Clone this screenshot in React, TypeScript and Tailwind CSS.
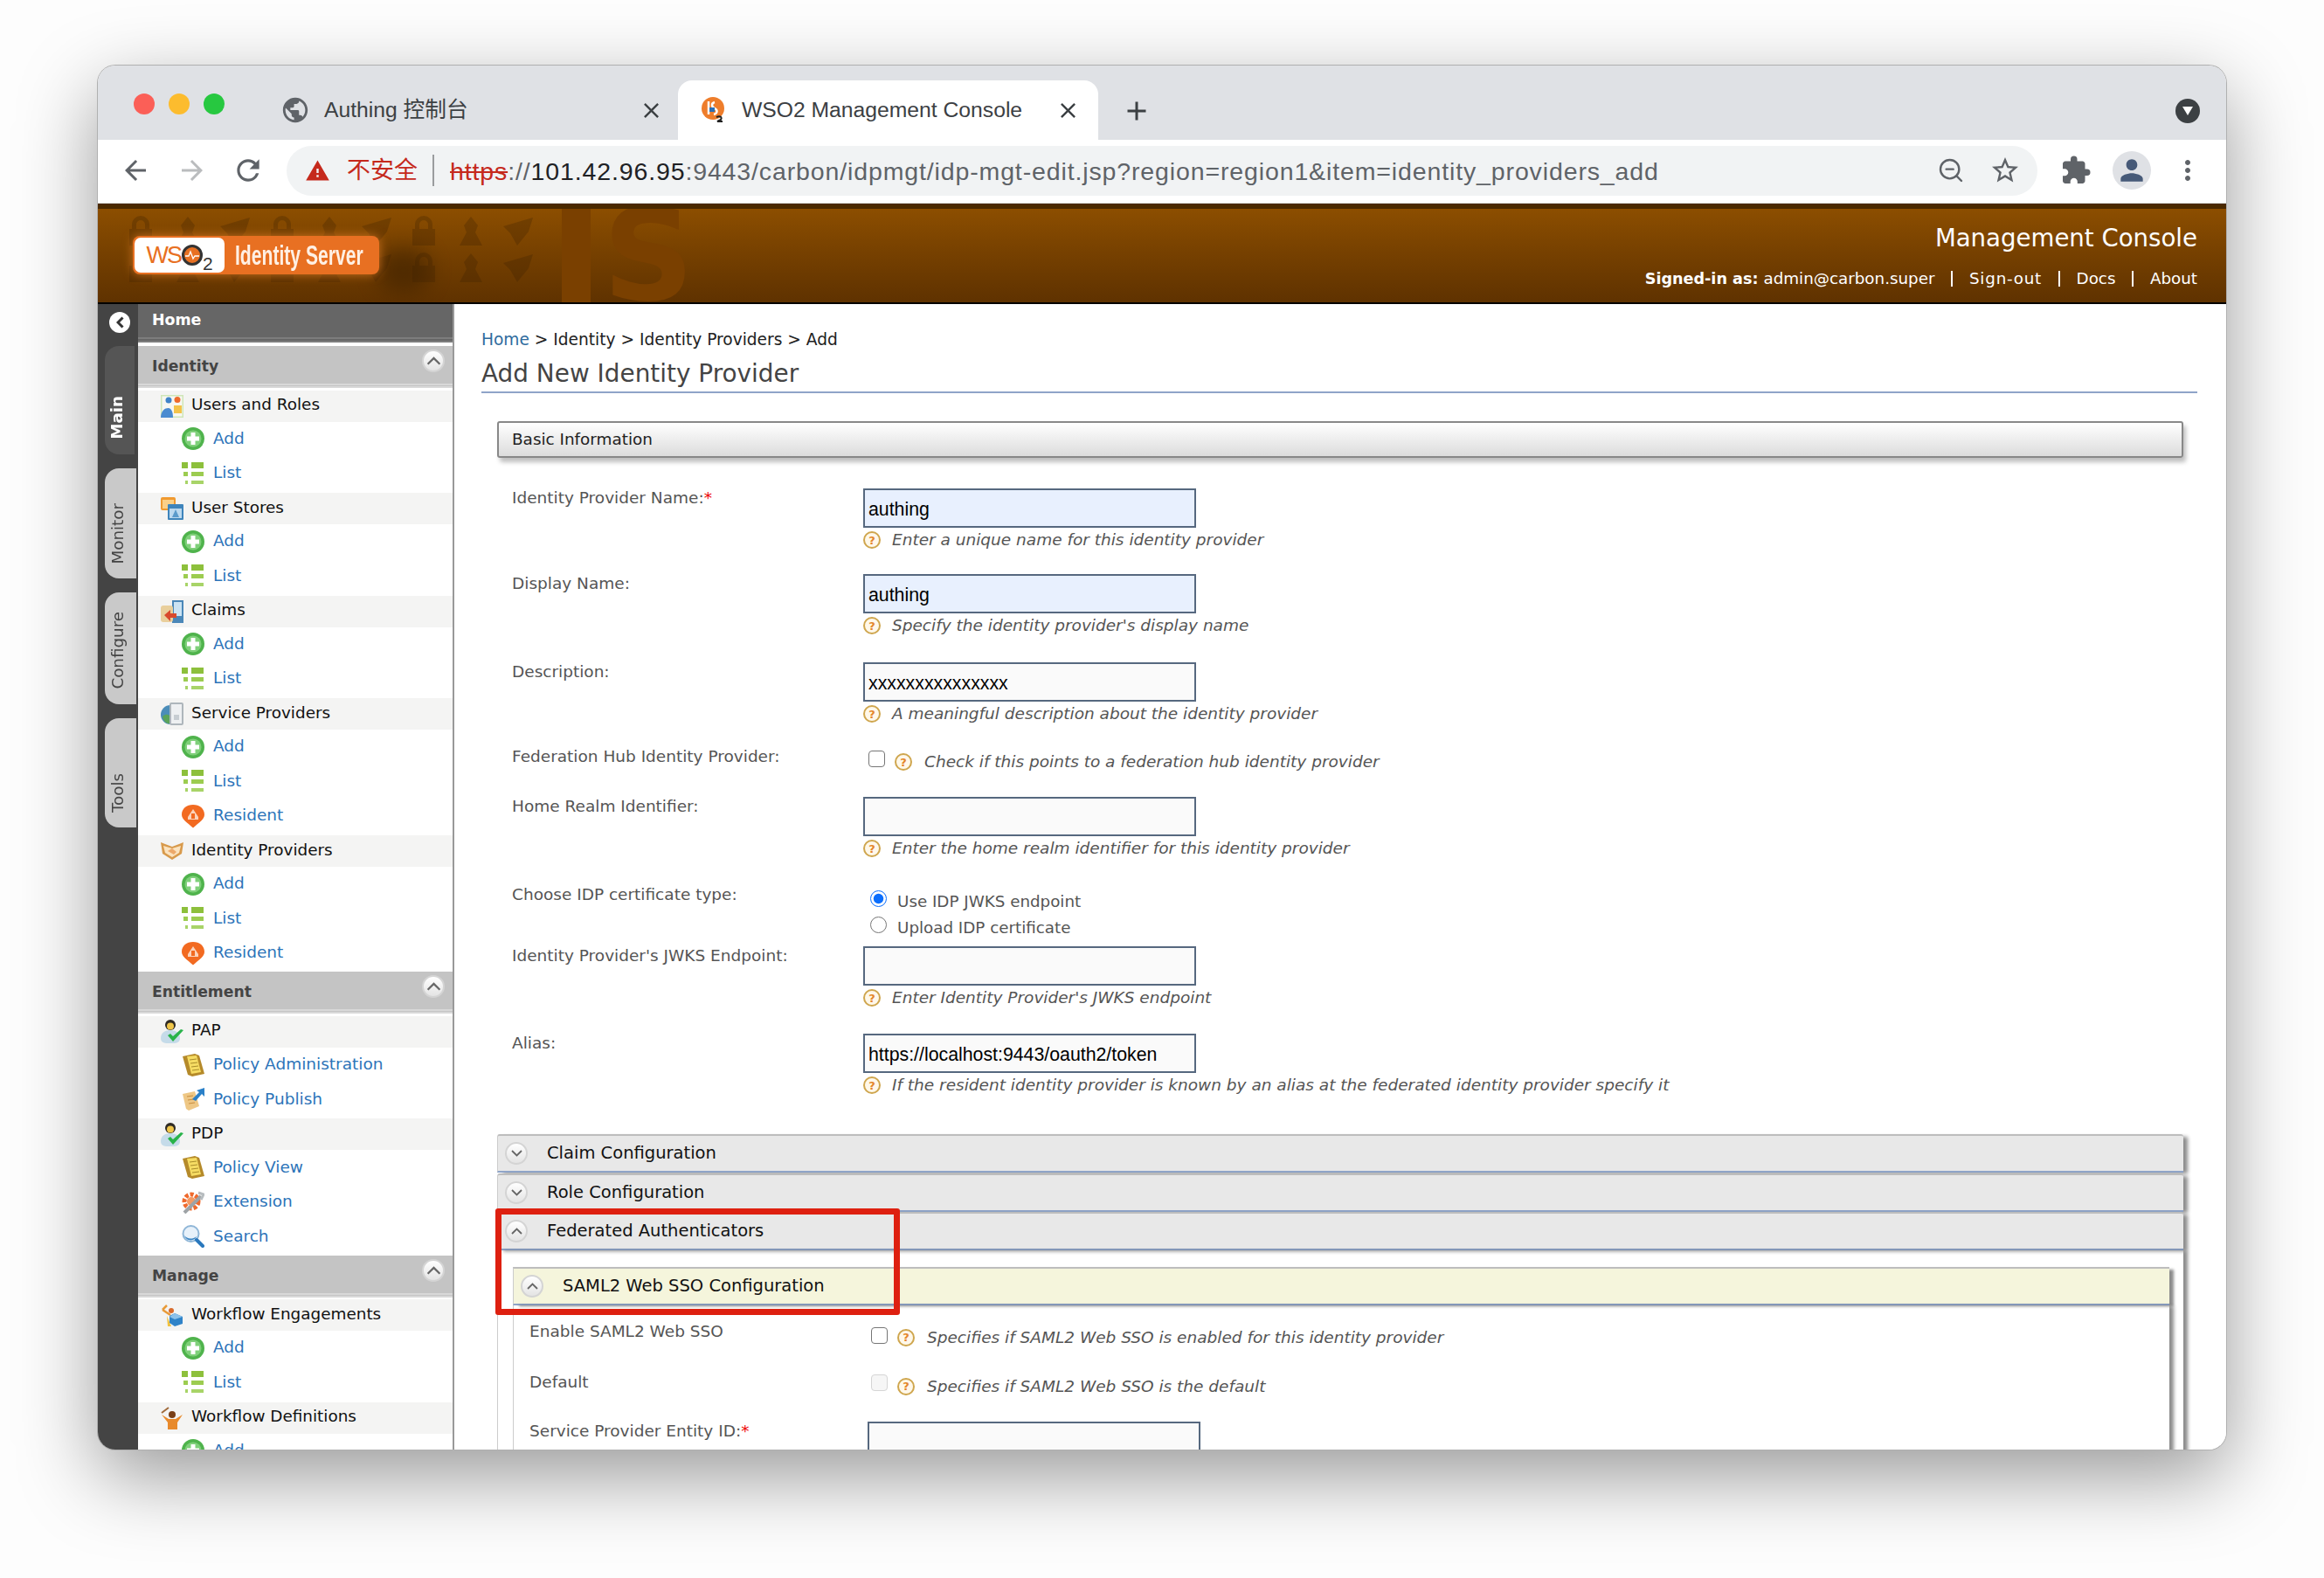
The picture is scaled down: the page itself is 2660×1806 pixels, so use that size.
import type { ReactNode } from "react";
import {
  MdAdd,
  MdArrowBack,
  MdArrowForward,
  MdClose,
  MdExtension,
  MdMoreVert,
  MdPerson,
  MdPublic,
  MdRefresh,
  MdStarBorder,
  MdWarning,
} from "react-icons/md";
import { ZoomOut } from "lucide-react";

const AddIcon = () => (
  <svg width="26" height="26" viewBox="0 0 26 26">
    <circle cx="13" cy="13" r="13" fill="#4fb34c" />
    <circle cx="13" cy="13" r="9.5" fill="#7fd07a" />
    <path d="M10.5 6h5v4.5H20v5h-4.5V20h-5v-4.5H6v-5h4.5z" fill="#fff" />
  </svg>
);

const ListIcon = () => (
  <svg width="26" height="26" viewBox="0 0 26 26">
    <rect x="0" y="0" width="7" height="7" fill="#8dc03c" />
    <rect x="11" y="0" width="14" height="7" fill="#8dc03c" />
    <rect x="2" y="11" width="5" height="5" fill="#9ccc50" />
    <rect x="11" y="11" width="14" height="5" fill="#9ccc50" />
    <rect x="4" y="21" width="3" height="4" fill="#a8d468" />
    <rect x="11" y="21" width="14" height="4" fill="#a8d468" />
  </svg>
);

const ResidentIcon = () => (
  <svg width="26" height="28" viewBox="0 0 26 28">
    <path d="M13 1c7.5 0 13 4.6 13 11.2 0 5.6-5.6 8.6-13 15.3C5.600 20.800 0 17.800 0 12.200 0 5.600 5.500 1 13 1z" fill="#f26a21" />
    <path d="M13 6l6 9v3H7v-3z" fill="#fbd3bb" />
    <rect x="11" y="11" width="4" height="6" fill="#f26a21" />
  </svg>
);

const UsersIcon = () => (
  <svg width="26" height="26" viewBox="0 0 26 26">
    <rect width="26" height="26" fill="#cfe6b8" />
    <rect x="1.500" y="1.500" width="23" height="23" fill="#f7f7f2" />
    <circle cx="9" cy="6" r="3.500" fill="#3f83c9" />
    <circle cx="19" cy="5.500" r="3.500" fill="#ee6a2c" />
    <path d="M14 26c0-7-2-11-5.500-11S0 18 0 26z" fill="#4a8bd0" />
    <rect x="15" y="12" width="9" height="9" fill="#f3c34a" />
  </svg>
);

const StoresIcon = () => (
  <svg width="26" height="26" viewBox="0 0 26 26">
    <rect x="0" y="0" width="17" height="15" rx="2" fill="#f09a30" />
    <rect x="2" y="3" width="13" height="10" fill="#fbd088" />
    <rect x="8" y="8" width="18" height="18" rx="1" fill="#3e84bb" />
    <rect x="10" y="13" width="14" height="11" fill="#bcd9ef" />
    <path d="M17 14l4 9h-8z" fill="#5a9acb" />
  </svg>
);

const ClaimsIcon = () => (
  <svg width="26" height="26" viewBox="0 0 26 26">
    <rect x="13" y="0" width="13" height="26" fill="#4a87b8" />
    <rect x="15" y="2" width="9" height="16" fill="#cbe3f3" />
    <rect x="0" y="6" width="14" height="19" rx="3" fill="#e9cf9c" />
    <path d="M4 17l7-6v4h7v5h-7v4z" fill="#d8492c" />
  </svg>
);

const ProvidersIcon = () => (
  <svg width="26" height="26" viewBox="0 0 26 26">
    <circle cx="11" cy="14" r="11" fill="#4b8db9" />
    <path d="M2 16c4-4 8-2 9 0v8C6 25 3 21 2 16z" fill="#5aa35a" />
    <rect x="10" y="0" width="16" height="26" rx="2" fill="#aeb6bc" />
    <rect x="12" y="2" width="12" height="22" fill="#eef0f2" />
    <rect x="15" y="14" width="6" height="6" fill="#c7cdd2" />
  </svg>
);

const HandshakeIcon = () => (
  <svg width="26" height="22" viewBox="0 0 26 22">
    <path d="M0 1l5 2 8 3 8-3 5-2-2 13-11 7L2 14z" fill="#d89a4c" />
    <path d="M3 5l10 3 10-3-2 8-8 5-8-5z" fill="#fbe3bf" />
    <path d="M8 11l5-3 5 4-3 3z" fill="#eda96a" />
  </svg>
);

const PersonCheckIcon = () => (
  <svg width="26" height="27" viewBox="0 0 26 27">
    <path d="M0 21c0-6 5-9 11-9s11 3 11 9-5 6-11 6S0 27 0 21z" fill="#c5dbe9" />
    <circle cx="11" cy="6" r="6" fill="#302b24" />
    <circle cx="11" cy="7.500" r="4" fill="#f0c64a" />
    <path d="M8 18l3-2 3 3 9-8 3 1-12 13z" fill="#28b34a" />
  </svg>
);

const ScrollIcon = () => (
  <svg width="26" height="26" viewBox="0 0 26 26">
    <path d="M1 3l14-3 5 2 6 21-14 3-5-2z" fill="#b58a2a" />
    <path d="M6 3l11-1 5 19-11 2z" fill="#f6dc63" />
    <path d="M9 7l8-1M10 11l8-1M11 15l8-1M12 19l8-1" stroke="#a98d2a" strokeWidth="1" />
  </svg>
);

const PublishIcon = () => (
  <svg width="26" height="26" viewBox="0 0 26 26">
    <path d="M1 7l14-3 5 17-12 5-3-2z" fill="#eec785" />
    <path d="M6 10l7-1M7 14l7-1M8 18l7-1" stroke="#c98e3f" strokeWidth="1.200" />
    <path d="M12 13L20 5l-3-2 9-3v10l-3-3-7 8z" fill="#2a80c8" />
  </svg>
);

const ExtensionIcon = () => (
  <svg width="26" height="26" viewBox="0 0 26 26">
    <circle cx="11" cy="12" r="8" fill="none" stroke="#ef6a2d" strokeWidth="5" strokeDasharray="4 2" />
    <circle cx="11" cy="12" r="5" fill="#f49a63" />
    <path d="M3 25L22 6" stroke="#9ea3a6" strokeWidth="4" />
    <path d="M19 2l6 2-3 6" fill="none" stroke="#b7bcbf" strokeWidth="3" />
  </svg>
);

const SearchIcon = () => (
  <svg width="26" height="26" viewBox="0 0 26 26">
    <circle cx="10.500" cy="10" r="9" fill="#e7f1fa" stroke="#8fb6d7" strokeWidth="2" />
    <path d="M3 12c3 4 9 5 14 1-2 6-12 6-14-1z" fill="#3c86c4" />
    <path d="M17 17l7 7" stroke="#2a78bd" strokeWidth="4" strokeLinecap="round" />
  </svg>
);

const WorkflowIcon = () => (
  <svg width="26" height="26" viewBox="0 0 26 26">
    <path d="M2 7l5-5M2 7l9 6" stroke="#e89a38" strokeWidth="2.500" fill="none" />
    <circle cx="12" cy="8" r="3" fill="#d96b2b" />
    <path d="M7 14l5 12H8z" fill="#f0c13e" />
    <path d="M16 11l9 4v8l-9 3-6-4v-8z" fill="#2f83c8" />
    <path d="M10 15l6 3 9-3-9-4z" fill="#8cc1ea" />
  </svg>
);

const PersonArmsIcon = () => (
  <svg width="26" height="26" viewBox="0 0 26 26">
    <path d="M1 9l8 5h8l8-5-6 9v8H8v-8z" fill="#e88a2c" />
    <circle cx="13" cy="9" r="4" fill="#7a3f17" />
    <path d="M1 7l8-6" stroke="#a06a3a" strokeWidth="2" />
  </svg>
);

// round toggle used on sidebar headers and the config bars
const Toggle = ({ up, big }: { up?: boolean; big?: boolean }) => (
  <span className="flex h-[26px] w-[26px] shrink-0 items-center justify-center rounded-full border-2 border-[#d4d4d4] bg-gradient-to-b from-white to-[#e4e4e4]">
    <svg width={big ? 17 : 13} height={big ? 10 : 8} viewBox="0 0 13 8" fill="none">
      <path d={up ? "M1 7l5.500-5.500L12 7" : "M1 1l5.500 5.500L12 1"} stroke="#666" strokeWidth="1.800" />
    </svg>
  </span>
);

const HelpIcon = () => (
  <span className="flex h-[20px] w-[20px] shrink-0 items-center justify-center rounded-full border-2 border-[#cfa64e] bg-[#fff8ea] text-[13px] leading-none font-bold text-[#e4862a]">
    ?
  </span>
);

type Group = { label: string; icon: ReactNode; items: [string, ReactNode][] };

const addList: [string, ReactNode][] = [
  ["Add", <AddIcon />],
  ["List", <ListIcon />],
];
const addListResident: [string, ReactNode][] = [...addList, ["Resident", <ResidentIcon />]];

const sections: { title: string; groups: Group[] }[] = [
  {
    title: "Identity",
    groups: [
      { label: "Users and Roles", icon: <UsersIcon />, items: addList },
      { label: "User Stores", icon: <StoresIcon />, items: addList },
      { label: "Claims", icon: <ClaimsIcon />, items: addList },
      { label: "Service Providers", icon: <ProvidersIcon />, items: addListResident },
      { label: "Identity Providers", icon: <HandshakeIcon />, items: addListResident },
    ],
  },
  {
    title: "Entitlement",
    groups: [
      {
        label: "PAP",
        icon: <PersonCheckIcon />,
        items: [
          ["Policy Administration", <ScrollIcon />],
          ["Policy Publish", <PublishIcon />],
        ],
      },
      {
        label: "PDP",
        icon: <PersonCheckIcon />,
        items: [
          ["Policy View", <ScrollIcon />],
          ["Extension", <ExtensionIcon />],
          ["Search", <SearchIcon />],
        ],
      },
    ],
  },
  {
    title: "Manage",
    groups: [
      { label: "Workflow Engagements", icon: <WorkflowIcon />, items: addList },
      { label: "Workflow Definitions", icon: <PersonArmsIcon />, items: addList },
    ],
  },
];

const railTabs = [
  { label: "Main", box: "h-[124px] w-[34px] bg-[#555]", text: "font-bold text-white" },
  { label: "Monitor", box: "h-[126px] w-[36px] bg-[#c9c9c9]", text: "text-[#444]" },
  { label: "Configure", box: "h-[128px] w-[36px] bg-[#c9c9c9]", text: "text-[#444]" },
  { label: "Tools", box: "h-[125px] w-[36px] bg-[#c9c9c9]", text: "text-[#444]" },
];

function BrowserChrome() {
  return (
    <>
      <div className="flex h-[85px] shrink-0 bg-[#dfe1e5]">
        <div className="flex w-[188px] shrink-0 gap-[16px] pt-[32px] pl-[41px]">
          <span className="h-[24px] w-[24px] rounded-full bg-[#fb5f57]" />
          <span className="h-[24px] w-[24px] rounded-full bg-[#fcbc2e]" />
          <span className="h-[24px] w-[24px] rounded-full bg-[#27c840]" />
        </div>
        <div className="flex w-[476px] shrink-0 items-center pt-[17px] pr-[16px] pl-[21px] text-[#3c4043]">
          <MdPublic size={34} className="text-[#5f6368]" />
          <span className="ml-[16px] text-[24.7px]">Authing 控制台</span>
          <MdClose size={29} className="ml-auto" />
        </div>
        <div className="mt-[17px] flex w-[481px] shrink-0 items-center rounded-t-[16px] bg-white pr-[20px] pl-[27px] text-[#3c4043]">
          <svg width="26" height="30" viewBox="0 0 26 30">
            <circle cx="13" cy="13" r="13" fill="#ee7d2b" />
            <path d="M8 5v15M15 6c-4 1-4 5 0 7s3 6-1 7" stroke="#fff" strokeWidth="2.500" fill="none" />
            <rect x="9" y="12" width="6" height="5" fill="#2a6fb5" />
            <path d="M17 23c4-2 7 0 5 3l-4 2h6" stroke="#222" strokeWidth="2" fill="none" />
          </svg>
          <span className="ml-[20px] text-[24.700px]">WSO2 Management Console</span>
          <MdClose size={29} className="ml-auto" />
        </div>
        <div className="ml-[26px] flex items-center pt-[18px]">
          <MdAdd size={36} className="text-[#3c4043]" />
        </div>
        <div className="mr-[30px] ml-auto flex items-center pt-[18px]">
          <span className="flex h-[28px] w-[28px] items-center justify-center rounded-full bg-[#3c4043]">
            <svg width="12" height="10" viewBox="0 0 12 10">
              <path d="M0 0h12L6 10z" fill="#fff" />
            </svg>
          </span>
        </div>
      </div>

      <div className="flex h-[73px] shrink-0 items-center border-b border-[#dadce0] bg-white pr-[26px] pb-[2px] pl-[25px] text-[#5f6368]">
        <MdArrowBack size={36} />
        <MdArrowForward size={36} className="ml-[29px] text-[#babcbe]" />
        <MdRefresh size={38} className="ml-[27px]" />
        <div className="ml-[25px] flex h-[57px] flex-1 items-center rounded-full bg-[#f1f3f4] pr-[19px] pl-[21px]">
          <MdWarning size={29} className="text-[#c5291c]" />
          <span className="ml-[19px] text-[27px] text-[#c5291c]">不安全</span>
          <span className="ml-[17px] h-[36px] w-[2px] bg-[#9a9c9e]" />
          <span className="ml-[18px] pt-[2px] text-[28.500px] tracking-[0.87px] whitespace-nowrap text-[#5f6368]">
            <span className="text-[#c5291c] line-through">https</span>
            ://
            <span className="text-[#202124]">101.42.96.95</span>
            :9443/carbon/idpmgt/idp-mgt-edit.jsp?region=region1&item=identity_providers_add
          </span>
          <ZoomOut size={32} strokeWidth={1.800} className="ml-auto" />
          <MdStarBorder size={36} className="ml-[28px]" />
        </div>
        <MdExtension size={36} className="ml-[26px]" />
        <span className="ml-[24px] flex h-[44px] w-[44px] items-center justify-center rounded-full bg-[#dfe1e5]">
          <MdPerson size={38} className="text-[#475a78]" />
        </span>
        <MdMoreVert size={36} className="ml-[24px]" />
      </div>
    </>
  );
}

function ConsoleHeader() {
  return (
    <header className="relative flex h-[115px] shrink-0 justify-between overflow-hidden border-t-[6px] border-b-2 border-t-[#4a2900] border-b-black bg-gradient-to-b from-[#8c4e00] to-[#5f3200] font-['DejaVu_Sans',sans-serif]">
      {/* faded background art of the banner */}
      <div className="absolute top-[6px] left-[30px] flex w-[500px] flex-wrap gap-x-[16px] gap-y-[4px] opacity-[0.28]">
        {[...Array(18)].map((_, i) => (
          <svg key={i} width="38" height="38" viewBox="0 0 38 38" className="text-[#3c2000]" fill="currentColor">
            {i % 3 === 0 ? (
              <path d="M9 17v-5a10 10 0 0 1 20 0v5h3v19H6V17zm5 0h10v-5a5 5 0 0 0-10 0z" />
            ) : i % 3 === 1 ? (
              <path d="M19 3l8 10-3 8 8 15H6l8-15-3-8z" />
            ) : (
              <path d="M2 14L36 4l-5 16-13 16-8-14z" />
            )}
          </svg>
        ))}
      </div>
      <div className="absolute top-[45px] left-[320px] h-[50px] w-[60px] rounded-full bg-[#3c2000] opacity-60 blur-md" />
      <div className="absolute top-0 bottom-0 left-[531px] w-[33px] bg-[#7a4000]" />
      <span className="absolute top-0 left-[578px] h-[107px] text-[145px] leading-[107px] font-bold text-[#7a4000]">S</span>

      <div className="relative mt-[31px] ml-[40px] flex h-[44px] w-[282px] items-center rounded-[8px] bg-[#e87022] shadow-[0_0_12px_#c9701e]">
        <div className="ml-[2px] flex h-[40px] w-[103px] shrink-0 items-center justify-center rounded-[7px] bg-white font-['Liberation_Sans',sans-serif] text-[#e87022]">
          <span className="text-[27px] tracking-[-2px]">WS</span>
          <span className="relative ml-[1px] h-[24px] w-[24px] rounded-full border-[3px] border-[#333] bg-[#e87022]">
            <svg width="18" height="18" viewBox="0 0 18 18" fill="none" className="absolute inset-0">
              <path d="M1 10h4l2-5 3 8 2-3h5" stroke="#fff" strokeWidth="1.300" />
            </svg>
          </span>
          <span className="mt-[18px] text-[21px] leading-none text-[#333]">2</span>
        </div>
        <span className="ml-[12px] origin-left scale-x-[0.66] font-['Liberation_Sans',sans-serif] text-[32px] font-bold whitespace-nowrap text-[#fff0e4]">
          Identity Server
        </span>
      </div>

      <div className="relative flex flex-col items-end pt-[16px] pr-[33px] text-white">
        <div className="text-[27.600px] leading-[36px]">Management Console</div>
        <div className="mt-[16px] flex items-center text-[18.300px] leading-[24px]">
          <span className="text-[17.600px] font-bold">Signed-in as:</span>
          <span className="ml-[6px]">admin@carbon.super</span>
          <span className="mx-[19px] h-[18px] w-[1.500px] bg-white" />
          <span className="tracking-[0.8px]">Sign-out</span>
          <span className="mx-[19px] h-[18px] w-[1.500px] bg-white" />
          <span>Docs</span>
          <span className="mx-[19px] h-[18px] w-[1.500px] bg-white" />
          <span>About</span>
        </div>
      </div>
    </header>
  );
}

function LeftRail() {
  return (
    <div className="h-full w-[46px] shrink-0 bg-[#444]">
      <div className="mt-[9px] ml-[13px] flex h-[24px] w-[24px] items-center justify-center rounded-full bg-white">
        <svg width="9" height="14" viewBox="0 0 9 14" fill="none">
          <path d="M7.500 1.500L2 7l5.500 5.500" stroke="#333" strokeWidth="3" />
        </svg>
      </div>
      <div className="mt-[15px] ml-[8px] flex flex-col gap-[16px]">
        {railTabs.map((tab) => (
          <div key={tab.label} className={`flex items-end justify-center rounded-l-[16px] pr-[6px] pb-[17px] ${tab.box}`}>
            <span className={`rotate-180 text-[18.300px] leading-[22px] [writing-mode:vertical-rl] ${tab.text}`}>
              {tab.label}
            </span>
          </div>
        ))}
      </div>
    </div>
  );
}

function Sidebar() {
  return (
    <aside className="h-full w-[362px] shrink-0 overflow-hidden border-r-2 border-[#999] bg-white">
      <div className="flex h-[44px] items-center border-b-[6px] border-double border-[#7d7d7d] bg-[#666] pb-[2px] pl-[16px] text-[17.400px] font-bold text-white">
        Home
      </div>
      <div className="pt-[4px]">
        {sections.map((section) => (
          <section key={section.title}>
            <div className="flex h-[48px] items-start justify-between border-b-[5px] border-double border-[#d8d8d8] bg-[#c4c4c4] pt-[4px] pr-[9px] pl-[16px]">
              <span className="mt-[7px] text-[17.200px] leading-[24px] font-bold text-[#444]">{section.title}</span>
              <Toggle up big />
            </div>
            {section.groups.map((group) => (
              <div key={group.label} className="mt-[2.500px] mb-[1.800px]">
                <div className="flex h-[36px] items-center bg-[#f4f4f3] pl-[26px] text-[#111]">
                  <span className="flex w-[35px] shrink-0">{group.icon}</span>
                  <span className="pb-[3px] text-[18.400px]">{group.label}</span>
                </div>
                {group.items.map(([label, icon]) => (
                  <div key={label} className="flex h-[39.500px] items-center pl-[50px] text-[#2d74b9]">
                    <span className="flex w-[36px] shrink-0">{icon}</span>
                    <span className="pb-[1px] text-[18.500px]">{label}</span>
                  </div>
                ))}
              </div>
            ))}
          </section>
        ))}
      </div>
    </aside>
  );
}

function Hint({ children }: { children: ReactNode }) {
  return <span className="text-[18.500px] leading-[22px] text-[#555] italic">{children}</span>;
}

function TextBox({ value = "", filled }: { value?: string; filled?: boolean }) {
  return (
    <input
      readOnly
      value={value}
      className={`block h-[45px] w-[381px] border-2 border-[#56687f] px-[4px] pt-[3px] font-['Liberation_Sans',sans-serif] text-[21.300px] text-black outline-none ${
        filled ? "bg-[#e8f0fe]" : "bg-[#fafafa]"
      }`}
    />
  );
}

function Field({ label, required, rowClass, value, filled, hint }: {
  label: string;
  required?: boolean;
  rowClass: string;
  value?: string;
  filled?: boolean;
  hint: string;
}) {
  return (
    <div className={`flex ${rowClass}`}>
      <div className="w-[419px] shrink-0 pl-[17px] text-[18.500px] leading-[22px] text-[#555]">
        {label}
        {required && <span className="text-[#e00]">*</span>}
      </div>
      <div>
        <TextBox value={value} filled={filled} />
        <div className="mt-[3px] flex items-center gap-[13px]">
          <HelpIcon />
          <Hint>{hint}</Hint>
        </div>
      </div>
    </div>
  );
}

function ConfigBar({ label, up }: { label: string; up?: boolean }) {
  return (
    <div className="flex h-[44px] items-center rounded-t-[3px] border-t-2 border-b-2 border-l border-t-[#bdbdbd] border-b-[#8fa4c8] border-l-[#ccc] bg-[#e8e8e8] pl-[8px] shadow-[6px_2px_4px_-1px_rgba(0,0,0,0.45)]">
      <Toggle up={up} />
      <span className="ml-[22px] text-[19.500px] text-[#111]">{label}</span>
    </div>
  );
}

function FormArea() {
  return (
    <main className="h-full min-w-0 flex-1 overflow-hidden bg-white pr-[33px] pl-[31px]">
      <div className="mt-[30px] text-[18.600px] leading-[22px] text-[#222]">
        <span className="text-[#2f6c9e]">Home</span> &gt; Identity &gt; Identity Providers &gt; Add
      </div>
      <h1 className="mt-[9px] border-b-2 border-[#8fa4c8] pb-[2px] text-[27.900px] leading-[37px] text-[#444]">
        Add New Identity Provider
      </h1>

      <div className="mr-[16px] ml-[18px]">
        <div className="mt-[32px] flex h-[42px] items-center rounded-[3px] border-2 border-[#888] bg-gradient-to-b from-white to-[#dcdcdc] pl-[15px] text-[18.400px] text-[#222] shadow-[3px_5px_5px_rgba(0,0,0,0.25)]">
          Basic Information
        </div>

        <div className="mt-[35px]">
          <Field label="Identity Provider Name:" required rowClass="h-[98px]" value="authing" filled hint="Enter a unique name for this identity provider" />
          <Field label="Display Name:" rowClass="h-[101px]" value="authing" filled hint="Specify the identity provider's display name" />
          <Field label="Description:" rowClass="h-[97px]" value="xxxxxxxxxxxxxxx" hint="A meaningful description about the identity provider" />

          <div className="flex h-[57px] items-start">
            <div className="w-[419px] shrink-0 pl-[17px] text-[18.500px] leading-[22px] text-[#555]">Federation Hub Identity Provider:</div>
            <input type="checkbox" className="mt-[4px] ml-[6px] h-[19px] w-[19px] appearance-none rounded-[4px] border-[1.500px] border-[#767676] bg-white" />
            <div className="mt-[6px] ml-[11px] flex items-center gap-[14px]">
              <HelpIcon />
              <Hint>Check if this points to a federation hub identity provider</Hint>
            </div>
          </div>

          <Field label="Home Realm Identifier:" rowClass="h-[101px]" hint="Enter the home realm identifier for this identity provider" />

          <div className="flex h-[70px] items-start">
            <div className="w-[419px] shrink-0 pl-[17px] text-[18.500px] leading-[22px] text-[#555]">Choose IDP certificate type:</div>
            <div className="ml-[8px] text-[18.300px] leading-[22px] text-[#555]">
              <label className="flex h-[30px] items-center gap-[12px]">
                <input type="radio" name="cert" defaultChecked className="m-0 h-[19px] w-[19px] accent-[#0b6efd]" />
                <span className="pt-[8px]">Use IDP JWKS endpoint</span>
              </label>
              <label className="flex h-[30px] items-center gap-[12px]">
                <input type="radio" name="cert" className="m-0 h-[19px] w-[19px]" />
                <span className="pt-[8px]">Upload IDP certificate</span>
              </label>
            </div>
          </div>

          <Field label="Identity Provider's JWKS Endpoint:" rowClass="h-[100px]" hint="Enter Identity Provider's JWKS endpoint" />
          <Field label="Alias:" rowClass="h-[115px]" value="https://localhost:9443/oauth2/token" hint="If the resident identity provider is known by an alias at the federated identity provider specify it" />
        </div>

        <div className="relative">
          <ConfigBar label="Claim Configuration" />
          <div className="mt-[1px]">
            <ConfigBar label="Role Configuration" />
          </div>
          <ConfigBar label="Federated Authenticators" up />

          <div className="border-l border-[#ccc] pt-[19px] pr-[16px] pb-[40px] pl-[17px] shadow-[6px_0_4px_-1px_rgba(0,0,0,0.45)]">
            <div className="flex h-[44px] items-center border-t-2 border-b-2 border-l border-t-[#bdbdbd] border-b-[#8fa4c8] border-l-[#ccc] bg-[#f5f5dc] pl-[8px] shadow-[6px_2px_3px_-1px_rgba(0,0,0,0.45)]">
              <Toggle up />
              <span className="ml-[22px] text-[19.500px] text-[#111]">SAML2 Web SSO Configuration</span>
            </div>
            <div className="border-l border-[#ccc] pt-[18.500px] text-[18.500px] leading-[22px] text-[#555] shadow-[6px_0_4px_-1px_rgba(0,0,0,0.45)]">
              <div className="flex h-[58px] items-start">
                <div className="w-[409px] shrink-0 pl-[18px]">Enable SAML2 Web SSO</div>
                <input type="checkbox" className="mt-[6px] h-[19px] w-[19px] appearance-none rounded-[4px] border-[1.500px] border-[#767676] bg-white" />
                <div className="mt-[7px] ml-[11px] flex items-center gap-[14px]">
                  <HelpIcon />
                  <Hint>Specifies if SAML2 Web SSO is enabled for this identity provider</Hint>
                </div>
              </div>
              <div className="flex h-[56px] items-start">
                <div className="w-[409px] shrink-0 pl-[18px]">Default</div>
                <input type="checkbox" disabled className="mt-[2px] h-[19px] w-[19px] appearance-none rounded-[4px] border-[1.500px] border-[#d5d5d5] bg-[#f6f6f6]" />
                <div className="mt-[5px] ml-[11px] flex items-center gap-[14px]">
                  <HelpIcon />
                  <Hint>Specifies if SAML2 Web SSO is the default</Hint>
                </div>
              </div>
              <div className="flex h-[60px] items-start">
                <div className="w-[405px] shrink-0 pl-[18px]">
                  Service Provider Entity ID:<span className="text-[#e00]">*</span>
                </div>
                <TextBox />
              </div>
            </div>
          </div>

          {/* annotation drawn over the screenshot */}
          <div className="absolute top-[85px] left-[-2px] h-[122px] w-[463px] rounded-[3px] border-[7px] border-[#de2010]" />
        </div>
      </div>
    </main>
  );
}

export default function App() {
  return (
    <div className="h-[1806px] w-[2660px] overflow-hidden bg-[#fdfdfd] pt-[75px] pl-[112px] font-['Liberation_Sans','Noto_Sans_CJK_SC',sans-serif]">
      <div className="flex h-[1584px] w-[2436px] flex-col overflow-hidden rounded-[20px] shadow-[0_0_0_1px_#b0b0b0,0_30px_90px_rgba(0,0,0,0.4)]">
        <BrowserChrome />
        <ConsoleHeader />
        <div className="flex min-h-0 flex-1 font-['DejaVu_Sans',sans-serif]">
          <LeftRail />
          <Sidebar />
          <FormArea />
        </div>
      </div>
    </div>
  );
}
